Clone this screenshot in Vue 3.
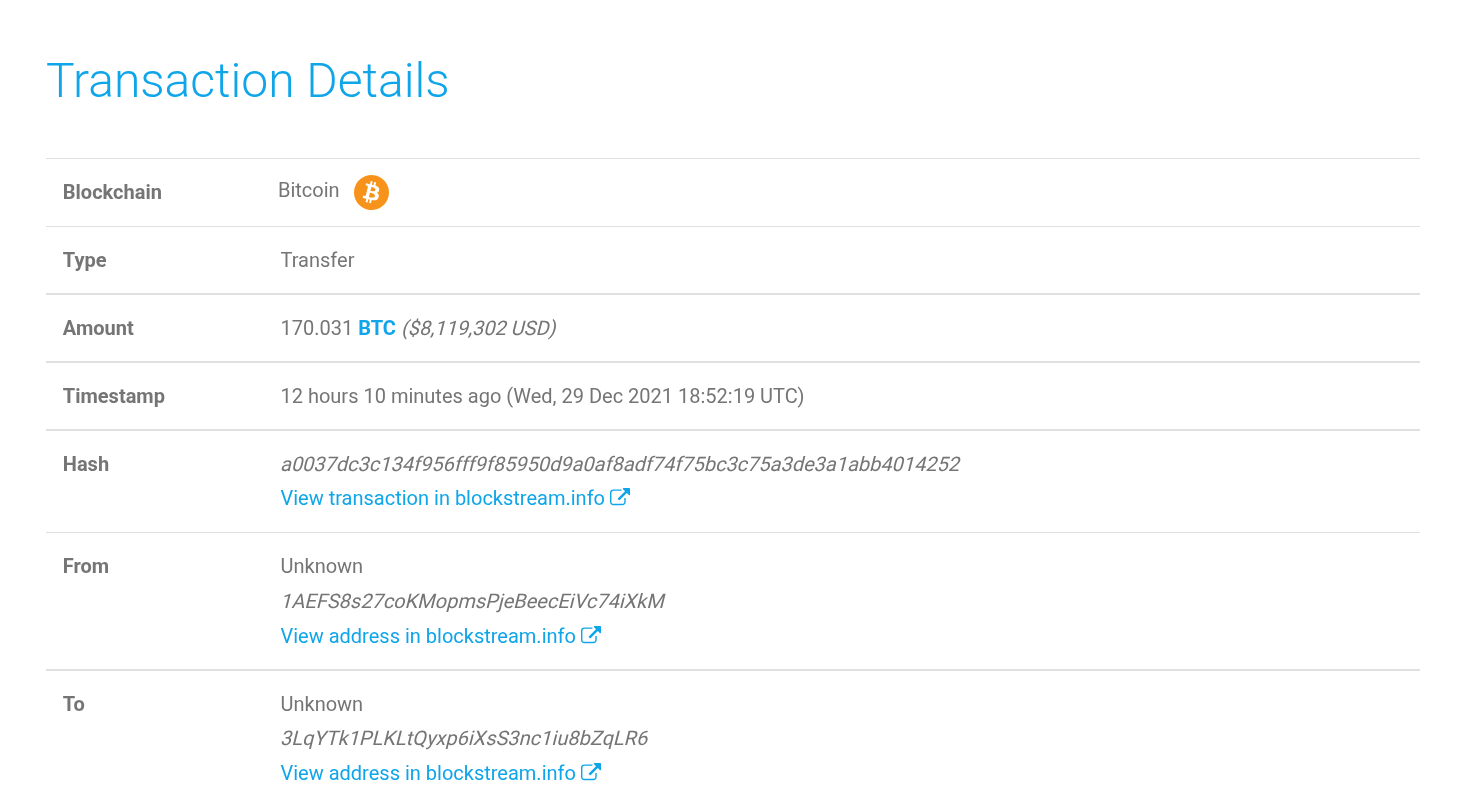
<script setup>
const linkIcon = "M1408 928v320q0 119-84.5 203.5t-203.5 84.5h-832q-119 0-203.5-84.5t-84.5-203.5v-832q0-119 84.5-203.5t203.5-84.5h704q14 0 23 9t9 23v64q0 14-9 23t-23 9h-704q-66 0-113 47t-47 113v832q0 66 47 113t113 47h832q66 0 113-47t47-113v-320q0-14 9-23t23-9h64q14 0 23 9t9 23zm384-864v512q0 26-19 45t-45 19-45-19l-176-176-652 652q-10 10-23 10t-23-10l-114-114q-10-10-10-23t10-23l652-652-176-176q-19-19-19-45t19-45 45-19h512q26 0 45 19t19 45z";
</script>

<template>
  <main class="page">
    <h1 class="title">Transaction Details</h1>
    <table class="details">
      <tbody>
        <tr>
          <th>Blockchain</th>
          <td>
            <div class="chain">
              <span class="chain-name">Bitcoin</span>
              <svg class="coin" viewBox="0 0 64 64" aria-hidden="true">
                <path fill="#f7931a" d="M63.04 39.741c-4.274 17.143-21.638 27.575-38.783 23.301C7.12 58.768-3.313 41.404.962 24.262 5.234 7.117 22.597-3.317 39.737.957c17.144 4.274 27.576 21.64 23.302 38.784z" />
                <path fill="#fff" d="M46.11 27.441c.636-4.258-2.606-6.547-7.039-8.074l1.438-5.768-3.512-.875-1.4 5.616c-.922-.23-1.87-.447-2.812-.662l1.41-5.653-3.509-.875-1.439 5.766c-.764-.174-1.514-.346-2.242-.527l.004-.018-4.842-1.209-.934 3.75s2.605.597 2.55.634c1.422.355 1.68 1.296 1.636 2.042l-1.638 6.571c.098.025.225.061.365.117l-.37-.092-2.297 9.205c-.174.432-.615 1.08-1.609.834.035.051-2.552-.637-2.552-.637l-1.743 4.02 4.57 1.139c.85.213 1.683.436 2.502.646l-1.453 5.835 3.507.875 1.44-5.772c.957.26 1.887.5 2.797.726L27.504 50.8l3.511.875 1.453-5.823c5.987 1.133 10.49.676 12.383-4.738 1.527-4.36-.075-6.875-3.225-8.516 2.294-.531 4.022-2.04 4.483-5.157zM38.087 38.69c-1.086 4.36-8.426 2.004-10.807 1.412l1.928-7.729c2.38.594 10.011 1.77 8.88 6.317zm1.085-11.312c-.99 3.966-7.1 1.951-9.083 1.457l1.748-7.01c1.983.494 8.367 1.416 7.335 5.553z" />
              </svg>
            </div>
          </td>
        </tr>
        <tr>
          <th>Type</th>
          <td>Transfer</td>
        </tr>
        <tr class="thick">
          <th>Amount</th>
          <td>170.031 <strong class="unit">BTC</strong> <span class="slant">($8,119,302 USD)</span></td>
        </tr>
        <tr class="thick">
          <th>Timestamp</th>
          <td>12 hours 10 minutes ago (Wed, 29 Dec 2021 18:52:19 UTC)</td>
        </tr>
        <tr>
          <th>Hash</th>
          <td>
            <div><span class="slant">a0037dc3c134f956fff9f85950d9a0af8adf74f75bc3c75a3de3a1abb4014252</span></div>
            <a class="ext" href="#">View transaction in blockstream.info
              <svg class="ext-icon" viewBox="0 0 1792 1792" aria-hidden="true"><path fill="currentColor" :d="linkIcon" /></svg>
            </a>
          </td>
        </tr>
        <tr class="thick">
          <th>From</th>
          <td class="stack">
            <div class="line gap">Unknown</div>
            <div><span class="slant">1AEFS8s27coKMopmsPjeBeecEiVc74iXkM</span></div>
            <a class="ext" href="#">View address in blockstream.info
              <svg class="ext-icon" viewBox="0 0 1792 1792" aria-hidden="true"><path fill="currentColor" :d="linkIcon" /></svg>
            </a>
          </td>
        </tr>
        <tr>
          <th>To</th>
          <td class="stack">
            <div class="line">Unknown</div>
            <div class="line gap"><span class="slant">3LqYTk1PLKLtQyxp6iXsS3nc1iu8bZqLR6</span></div>
            <a class="ext" href="#">View address in blockstream.info
              <svg class="ext-icon" viewBox="0 0 1792 1792" aria-hidden="true"><path fill="currentColor" :d="linkIcon" /></svg>
            </a>
          </td>
        </tr>
      </tbody>
    </table>
  </main>
</template>

<style>
html, body { margin: 0; background: #fff; overflow: hidden; }
</style>

<style scoped>
.page {
  padding: 48px 42px 0 46px;
  font-family: Roboto, "Liberation Sans", sans-serif;
  font-size: 20px;
  line-height: 34px;
  color: #757575;
  will-change: transform;
}
.title {
  margin: 0 0 44px;
  font-size: 48px;
  line-height: 66px;
  font-weight: 300;
  color: #0ea5e9;
}
.details {
  width: 100%;
  border-collapse: collapse;
  border-top: 1px solid #e0e0e0;
}
.details tr { border-bottom: 1px solid #e0e0e0; }
.details th, .details td {
  padding: 16px 16px 17px 17px;
  vertical-align: top;
  text-align: left;
}
.details th {
  padding-left: 16.8px;
  padding-right: 16.2px;
  width: 184.5px;
  font-weight: 700;
}
.details tr:nth-child(2) th, .details tr:nth-child(2) td,
.details .thick th, .details .thick td {
  box-shadow: inset 0 -1px 0 #e0e0e0;
}
.details .stack { line-height: 35px; padding-bottom: 16px; }
.line { line-height: 34px; }
.gap { padding-bottom: 1px; }
.chain {
  display: flex;
  align-items: center;
  gap: 14px;
  height: 34px;
  margin-left: -2.5px;
}
.chain-name { margin-top: -4px; }
.coin { width: 35px; height: 35px; }
.unit { color: #0ea5e9; font-weight: 700; }
.slant {
  display: inline-block;
  transform: skewX(-14deg);
  transform-origin: 0 24px;
}
.ext { color: #0ea5e9; text-decoration: none; }
.ext-icon {
  width: 20px;
  height: 20px;
  vertical-align: -3px;
}
</style>
